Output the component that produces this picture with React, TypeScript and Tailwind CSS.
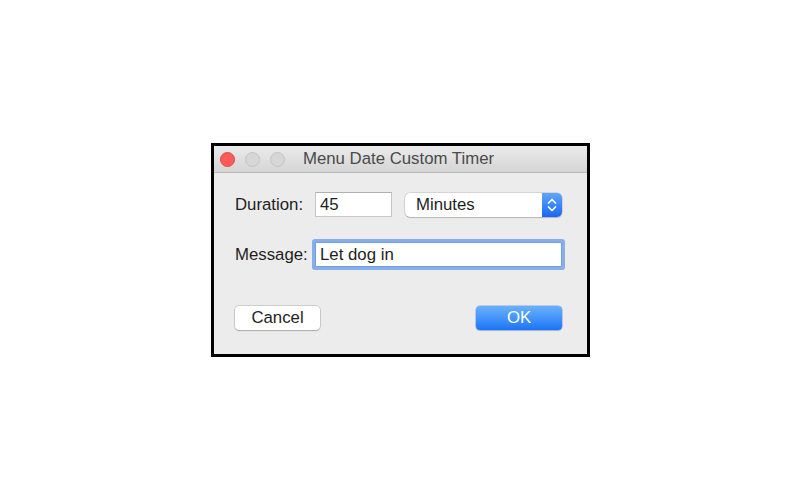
import React from "react";

export default function App() {
  const font = { fontFamily: '"Liberation Sans", Arial, sans-serif' };
  return (
    <div className="w-[800px] h-[500px] bg-white overflow-hidden" style={font}>
      <div className="ml-[211px] mt-[143px] w-[379px] h-[214px] border-[3px] border-black bg-[#ececec] flex flex-col">
        {/* Title bar */}
        <div className="h-[27px] grid grid-cols-[1fr_auto_1fr] items-center bg-gradient-to-b from-[#ebebeb] to-[#d5d5d5] border-b border-[#b9b9b9]">
          <div className="flex items-center gap-[10px] pl-[6px]">
            <span className="w-[15px] h-[15px] rounded-full bg-[#fc5b57] border border-[#e24843]" />
            <span className="w-[15px] h-[15px] rounded-full bg-[#d6d6d6] border border-[#c4c4c4]" />
            <span className="w-[15px] h-[15px] rounded-full bg-[#d6d6d6] border border-[#c4c4c4]" />
          </div>
          <div className="text-[16.8px] text-[#4a4a4a] leading-none -ml-[4px]">Menu Date Custom Timer</div>
          <div />
        </div>

        {/* Content */}
        <div className="flex flex-col pl-[21px] pt-[19px] text-[16.8px] text-[#1e1e1e]">
          <div className="flex items-center h-[25px]">
            <div className="w-[80px]">Duration:</div>
            <div className="w-[77px] h-[25px] bg-white border border-[#c6c6c6] border-t-[#b0b0b0] flex items-center pl-[4px]">45</div>
            <div className="ml-[13px] w-[157px] h-[24px] bg-white rounded-[5px] shadow-[0_0_0_0.5px_rgba(0,0,0,0.2),0_1px_1px_rgba(0,0,0,0.15)] flex items-center overflow-hidden">
              <div className="flex-1 pl-[11px]">Minutes</div>
              <div className="w-[20px] h-full bg-gradient-to-b from-[#5fa4fb] to-[#1967f3] flex items-center justify-center">
                <svg width="10" height="18" viewBox="0 0 10 18" fill="none" stroke="white" strokeWidth="1.7" strokeLinecap="round" strokeLinejoin="round">
                  <path d="M1.5 7 L5 3.5 L8.5 7" />
                  <path d="M1.5 11 L5 14.5 L8.5 11" />
                </svg>
              </div>
            </div>
          </div>

          <div className="flex items-center h-[25px] mt-[25px]">
            <div className="w-[80px]">Message:</div>
            <div className="w-[247px] h-[25px] bg-white border border-[#6f9fe4] rounded-[1px] shadow-[0_0_0_3px_#86aee9] flex items-center pl-[4px]">Let dog in</div>
          </div>

          <div className="flex items-center h-[24px] mt-[39px]">
            <div className="w-[85px] h-[24px] bg-white rounded-[4px] shadow-[0_0_0_0.5px_rgba(0,0,0,0.25),0_1px_1.5px_rgba(0,0,0,0.18)] flex items-center justify-center">Cancel</div>
            <div className="ml-[156px] w-[86px] h-[24px] rounded-[4px] bg-gradient-to-b from-[#69b1fc] to-[#1a74f6] shadow-[0_0_0_0.5px_rgba(0,60,200,0.4),0_1px_1px_rgba(0,0,0,0.12)] flex items-center justify-center text-white">OK</div>
          </div>
        </div>
      </div>
    </div>
  );
}
